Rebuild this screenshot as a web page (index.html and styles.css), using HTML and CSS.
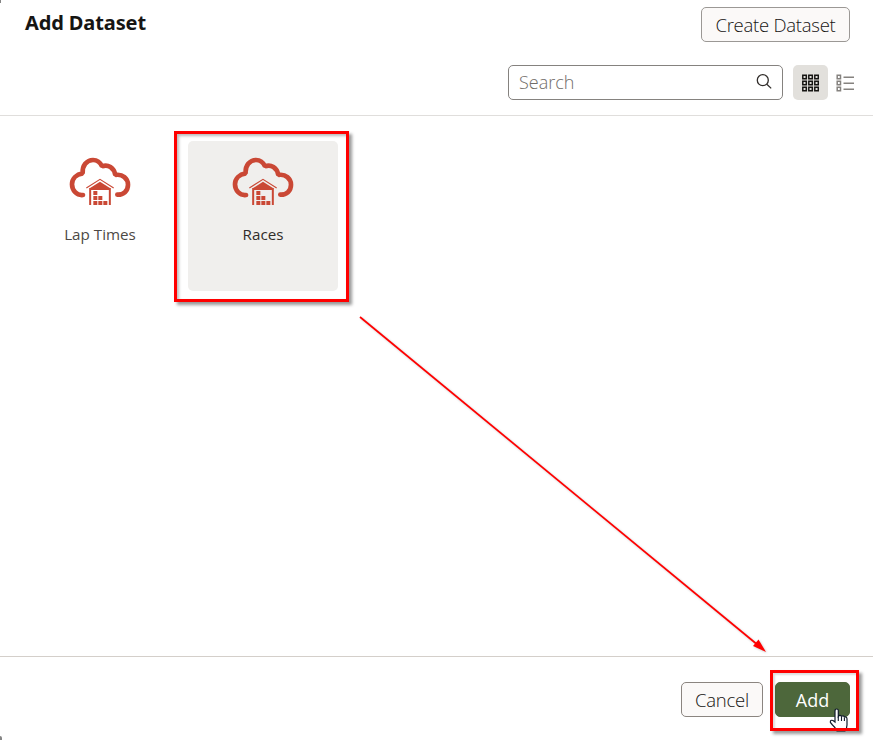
FILE: index.html
```
<!DOCTYPE html>
<html lang="en">
<head>
<meta charset="utf-8">
<title>Add Dataset</title>
<link rel="stylesheet" href="styles.css">
</head>
<body>
<svg class="defs" aria-hidden="true">
  <symbol id="cloud" viewBox="54 36 192 150">
    <path d="M99 150C80 152 66 136 66 118C66 101 79 88 98 85C96 62 110 45 129 45C142 45 151 53 156 64C174 57 192 68 196 90C218 86 234 101 234 119C234 138 220 150 202 149" fill="none" stroke="currentColor" stroke-width="14" stroke-linecap="round" stroke-linejoin="bevel"/>
    <path d="M109 129L150 103L191 129" fill="none" stroke="currentColor" stroke-width="3.5"/>
    <path d="M150 110L181 130H119Z" fill="currentColor"/>
    <path d="M120.500 180V132H179.500V180" fill="none" stroke="currentColor" stroke-width="6"/>
    <path d="M130 138h12v12h-12zM130 153h12v12h-12zM145 153h12v12h-12zM130 168h12v12h-12zM145 168h12v12h-12zM160 168h12v12h-12z" fill="currentColor"/>
  </symbol>
</svg>
<div class="dialog">
  <header class="header">
    <div class="title-row">
      <h1>Add Dataset</h1>
      <button class="btn create"><span>Create Dataset</span></button>
    </div>
    <div class="tools">
      <div class="search">
        <span>Search</span>
        <svg width="18" height="18" viewBox="0 0 18 18" fill="none" stroke="#312d2a" stroke-width="1.300"><circle cx="7.800" cy="7.200" r="5.500"/><path d="M11.800 11.200L16.200 15.400"/></svg>
      </div>
      <button class="view active" aria-label="Grid view">
        <svg width="17" height="18" viewBox="0 0 17 18" fill="none" stroke="#161513" stroke-width="1.500"><path d="M.8 1.300h3.500v3.500H.8zM6.800 1.300h3.500v3.500H6.800zM12.800 1.300h3.500v3.500h-3.500zM.8 7.300h3.500v3.500H.8zM6.800 7.300h3.500v3.500H6.800zM12.800 7.300h3.500v3.500h-3.500zM.8 13.300h3.500v3.500H.8zM6.800 13.300h3.500v3.500H6.800zM12.800 13.300h3.500v3.500h-3.500z"/></svg>
      </button>
      <button class="view" aria-label="List view">
        <svg width="18" height="18" viewBox="0 0 18 18" fill="none" stroke="#85827f" stroke-width="1.500"><path d="M1.200 1.300h3.300v3.500H1.200zM1.200 7.300h3.300v3.500H1.200zM1.200 13.300h3.300v3.500H1.200zM7.500 3.200H18M7.500 9.200H18M7.500 15.200H18"/></svg>
      </button>
    </div>
  </header>
  <main class="content">
    <div class="tile"><svg class="cloud"><use href="#cloud"/></svg><span>Lap Times</span></div>
    <div class="tile selected"><svg class="cloud"><use href="#cloud"/></svg><span>Races</span></div>
  </main>
  <footer class="footer">
    <button class="btn cancel"><span>Cancel</span></button>
    <button class="btn add"><span>Add</span></button>
  </footer>
  <svg class="arrow" width="873" height="740" viewBox="0 0 873 740">
    <g fill="#f00"><path d="M360 317L756 643.500" stroke="#f00" stroke-width="1.700"/><path d="M766 652L753 646L758.500 639.500Z"/></g>
  </svg>
  <svg class="cursor" width="20" height="25" viewBox="0 0 20 25"><path d="M6 14V3Q6 1 7.700 1T9.300 3V8.500Q11 6.500 12.500 8.300Q14.500 7 15.400 9Q18 8.500 18 11V17Q18 20 16 23H8Q6.500 19.500 3.500 17L1.400 14.500Q1 11.500 4 12.500Z" fill="#fff" stroke="#111c2c" stroke-width="1.200"/><path d="M9.300 8.500V13M12.500 8.500V13M15.400 9.500V13" stroke="#111c2c" stroke-width="1.100"/></svg>
  <div class="mark mark-races"></div>
  <div class="mark mark-add"></div>
  <i class="corner top"></i><i class="corner bottom"></i>
</div>
</body>
</html>
```
FILE: styles.css
```
* { box-sizing: border-box; }
body { margin: 0; background: #fff; color: #161513; font-family: "Open Sans", "Noto Sans", sans-serif; }
.defs { position: absolute; width: 0; height: 0; }
.dialog { position: relative; width: 873px; height: 740px; display: flex; flex-direction: column; overflow: hidden; background: #fff; }
.header { height: 116px; flex: none; border-bottom: 1px solid #e0dedc; padding: 7px 11px 0 25px; }
.title-row { display: flex; justify-content: space-between; padding-right: 12px; height: 58px; }
h1 { margin: 3px 0 0; font: 700 20px/26px "Noto Sans", sans-serif; white-space: nowrap; letter-spacing: -.12px; }
.btn { height: 35px; padding: 0; border: 1px solid #9b9895; border-radius: 5px; background: #fbf9f8; color: #161513; font: 300 18.5px/33px "Open Sans", sans-serif; letter-spacing: -.25px; white-space: nowrap; display: flex; align-items: center; justify-content: center; }
.create { width: 149px; }
.tools { display: flex; justify-content: flex-end; }
.search { width: 275px; height: 35px; margin-right: 10px; border: 1px solid #85827f; border-radius: 5px; padding: 0 9px 0 10px; display: flex; align-items: center; justify-content: space-between; font-size: 18px; font-weight: 300; color: #706c68; }
.search span { padding-bottom: 2px; }
.search svg { margin-bottom: 2px; }
.view { width: 35px; height: 35px; padding: 0; border: 0; border-radius: 5px; background: none; display: flex; align-items: center; justify-content: center; }
.view.active { background: #e2e0dc; }
.view:last-child { width: 34px; }
.content { flex: 1; display: flex; align-items: flex-start; gap: 13px; padding: 25px 25px 0; }
.tile { width: 150px; height: 150px; border-radius: 5px; display: flex; flex-direction: column; align-items: center; padding-top: 16px; font-size: 15.2px; line-height: 20px; color: #4d4945; }
.tile.selected { background: #f0efed; color: #312d2a; }
.cloud { width: 64px; height: 50px; color: #ca4835; }
.tile span { margin-top: 17px; }
.footer { height: 84px; flex: none; border-top: 1px solid #d4cfca; display: flex; justify-content: flex-end; gap: 12px; padding: 25px 23px 0 0; }
.cancel { width: 82px; border-color: #8b8580; }
.add { width: 75px; border-color: #4d673b; background: #4d673b; color: #fff; font-weight: 400; font-size: 18px; letter-spacing: 0; }
.add span { padding-top: 2px; }
.mark { position: absolute; border: 3px solid #f00; pointer-events: none; }
.mark-races { left: 174px; top: 131px; width: 175px; height: 171px; box-shadow: 3px 3px 3px #0006, inset 2px 2px 3px #0004; }
.mark-add { left: 770px; top: 670px; width: 89px; height: 61px; box-shadow: 3px 3px 3px #0006, inset 2px 2px 2px #0002; }
.arrow { position: absolute; inset: 0; pointer-events: none; filter: drop-shadow(1px 1px 1px #0003); }
.cursor { position: absolute; left: 829px; top: 708px; }
.corner { position: absolute; left: 0; width: 1px; height: 3px; background: #858585; }
.top { top: 0; }
.bottom { bottom: 0; height: 4px; width: 2px; border-top-right-radius: 3px; }
```
